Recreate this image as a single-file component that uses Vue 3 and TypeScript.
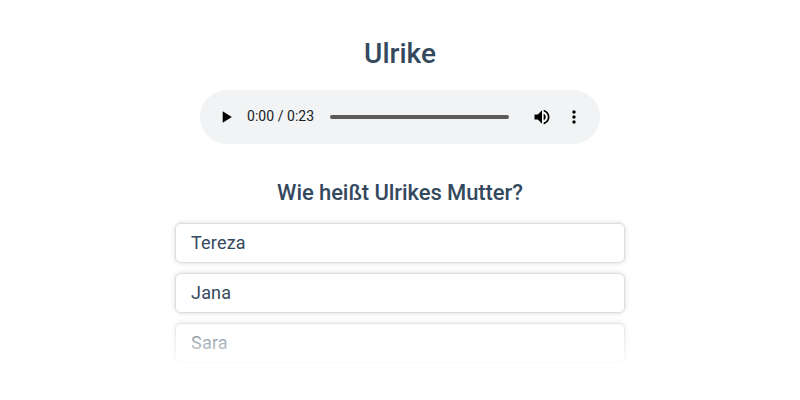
<script setup lang="ts">
const answers: string[] = ['Tereza', 'Jana', 'Sara']
</script>

<template>
  <main class="quiz">
    <h1>Ulrike</h1>
    <div class="player">
      <svg class="icon play" viewBox="0 0 24 24"><path d="M8 5v14l11-7z" /></svg>
      <span class="time">0:00 / 0:23</span>
      <div class="track"></div>
      <svg class="icon volume" viewBox="0 0 24 24"><path d="M3 9v6h4l5 5V4L7 9H3zm13.5 3c0-1.77-1.02-3.29-2.5-4.03v8.05c1.48-.73 2.5-2.25 2.5-4.02zM14 3.23v2.06c2.89.86 5 3.54 5 6.71s-2.11 5.85-5 6.71v2.06c4.01-.91 7-4.49 7-8.77s-2.99-7.86-7-8.77z" /></svg>
      <svg class="icon" viewBox="0 0 24 24"><path d="M12 8c1.1 0 2-.9 2-2s-.9-2-2-2-2 .9-2 2 .9 2 2 2zm0 2c-1.1 0-2 .9-2 2s.9 2 2 2 2-.9 2-2-.9-2-2-2zm0 6c-1.1 0-2 .9-2 2s.9 2 2 2 2-.9 2-2-.9-2-2-2z" /></svg>
    </div>
    <h2>Wie heißt Ulrikes Mutter?</h2>
    <div class="answers">
      <div v-for="answer in answers" :key="answer" class="answer">{{ answer }}</div>
      <div class="fade"></div>
    </div>
  </main>
</template>

<style>
body {
  background: #fff;
}
</style>

<style scoped>
.quiz {
  display: flex;
  flex-direction: column;
  align-items: center;
  height: 400px;
  padding-top: 37px;
  box-sizing: border-box;
  overflow: hidden;
  font-family: Roboto, sans-serif;
  color: #34495e;
  -webkit-font-smoothing: antialiased;
}
h1 {
  margin: 0;
  font-size: 28px;
  line-height: 34px;
  font-weight: 500;
}
.player {
  display: flex;
  align-items: center;
  box-sizing: border-box;
  width: 400px;
  height: 54px;
  margin-top: 19px;
  padding: 0 16px;
  border-radius: 27px;
  background: #f1f3f4;
}
.icon {
  width: 20px;
  height: 20px;
  flex: none;
  fill: #000;
}
.time {
  width: 67px;
  margin-left: 11px;
  padding-bottom: 2px;
  font-size: 14px;
  line-height: 20px;
  letter-spacing: 0.04px;
  white-space: nowrap;
  color: #202124;
}
.track {
  width: 179px;
  height: 4px;
  margin: 0 23px 0 16px;
  border-radius: 2px;
  background: #5a5a5b;
}
.volume {
  margin-right: 12px;
}
h2 {
  margin: 35px 0 0;
  font-size: 22px;
  line-height: 28px;
  font-weight: 500;
  letter-spacing: -0.08px;
}
.answers {
  position: relative;
  width: 450px;
  height: 140px;
  margin-top: 16px;
}
.answer {
  box-sizing: border-box;
  height: 40px;
  margin-bottom: 10px;
  padding: 0 15px;
  border: 1px solid #ddd;
  border-radius: 6px;
  box-shadow: 0 0 5px rgba(0, 0, 0, 0.15);
  background: #fff;
  font-size: 18px;
  line-height: 38px;
  letter-spacing: 0.2px;
}
.fade {
  position: absolute;
  left: -6px;
  right: -6px;
  bottom: -10px;
  height: 56px;
  background: linear-gradient(
    rgba(255, 255, 255, 0),
    rgba(255, 255, 255, 0.25) 6px,
    rgba(255, 255, 255, 0.55) 25px,
    rgba(255, 255, 255, 0.88) 46px,
    #fff 47px
  );
}
</style>
